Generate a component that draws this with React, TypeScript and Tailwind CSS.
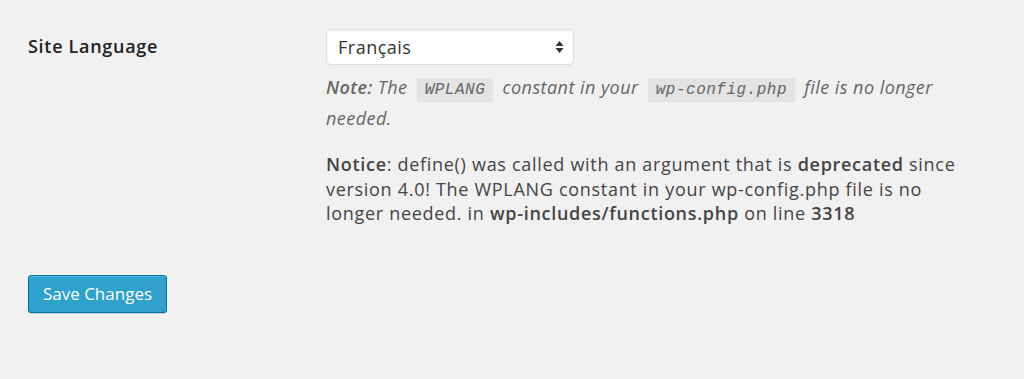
import React from 'react'

function Code({ children }: { children: React.ReactNode }) {
  return (
    <code className="mx-[4px] bg-[#e3e3e3] px-[8px] py-[3px] font-['Liberation_Mono',monospace] text-[16px] italic tracking-[0.5px] text-[#666]">
      {children}
    </code>
  )
}

export default function App() {
  return (
    <div className="min-h-[379px] bg-[#f1f1f1] pl-[28px] pt-[29px] font-['Open_Sans',sans-serif] text-[#444]">
      <div className="flex">
        <div className="w-[298px] shrink-0 pt-[4px] text-[18px] font-semibold tracking-[0.7px] text-[#222]">
          Site Language
        </div>

        <div className="w-[640px]">
          <div className="relative w-[248px]">
            <select
              defaultValue="fr"
              className="h-[36px] w-full appearance-none rounded-[5px] border border-[#dddddd] bg-white pl-[11px] font-['Open_Sans',sans-serif] text-[18px] tracking-[0.5px] text-[#333] shadow-[inset_0_1px_2px_rgba(0,0,0,0.07)] outline-none"
            >
              <option value="fr">Français</option>
              <option value="en">English (United States)</option>
            </select>
            <svg
              className="pointer-events-none absolute right-[10px] top-[11px]"
              width="9"
              height="14"
              viewBox="0 0 9 14"
            >
              <path d="M4.5 1 L8.5 6 L0.5 6 Z" fill="#333" />
              <path d="M4.5 13 L8.5 8 L0.5 8 Z" fill="#333" />
            </svg>
          </div>

          <p className="mt-[8px] text-[18px] italic leading-[28px] tracking-[0.45px] text-[#666]">
            <strong className="font-semibold">Note:</strong> The <Code>WPLANG</Code> constant in your{' '}
            <Code>wp-config.php</Code> file is no longer needed.
          </p>

          <p className="mt-[20px] text-[18px] leading-[24.5px] tracking-[0.7px]">
            <b className="font-semibold">Notice</b>: define() was called with an argument that is{' '}
            <b className="font-semibold">deprecated</b> since version 4.0! The WPLANG constant in your wp-config.php file
            is no longer needed. in <b className="font-semibold">wp-includes/functions.php</b> on line{' '}
            <b className="font-semibold">3318</b>
          </p>
        </div>
      </div>

      <button className="mt-[49px] h-[38px] w-[139px] rounded-[3px] border border-[#0074a2] bg-[#2ea2cc] text-[17px] text-white shadow-[inset_0_1px_0_rgba(120,200,230,0.5),0_1px_0_rgba(0,0,0,0.15)]">
        Save Changes
      </button>
    </div>
  )
}
